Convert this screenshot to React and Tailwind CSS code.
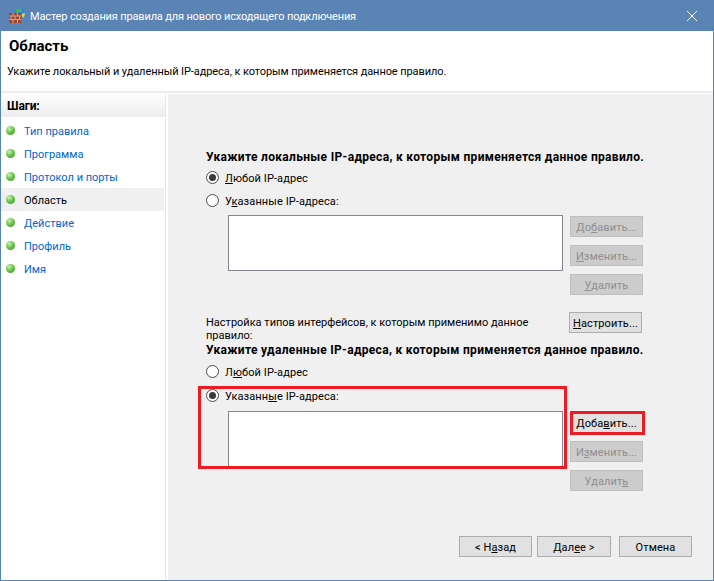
const FONT = "font-['Roboto','Noto_Sans',sans-serif]";

const STEPS = ['Тип правила', 'Программа', 'Протокол и порты', 'Область', 'Действие', 'Профиль', 'Имя'];

function FirewallIcon() {
  return (
    <svg width="17" height="17" viewBox="0 0 17 17" className="shrink-0">
      <circle cx="10.500" cy="5.500" r="5.500" fill="#2a86d8" />
      <path d="M6 3 Q9 -0.500 13 0.800 L12.500 4 L9.500 3.500 L8 6 Z" fill="#4fb548" />
      <path d="M12 6 L16 5 Q16 8 14 10 Z" fill="#d9d84e" />
      <rect x="0" y="5" width="12.500" height="10" fill="#9a4630" />
      <path d="M0 8h12.500M0 11.500h12.500M4 5v3M8.500 5v3M2 8v3.500M6 8v3.500M10.500 8v3.500M4 11.500V15M8.500 11.500V15" stroke="#d8a48a" strokeWidth="1" fill="none" />
    </svg>
  );
}

function Bullet() {
  return (
    <span className="w-[9px] h-[9px] rounded-full shrink-0 bg-[radial-gradient(circle_at_35%_30%,#c8f0b0,#5dbb3c_55%,#3f9a2c)]" />
  );
}

function Radio({ checked, children }) {
  return (
    <div className="flex items-center h-[15px] gap-[6px] text-black whitespace-nowrap tracking-[0.1px]">
      <span className="w-[13px] h-[13px] rounded-full border border-[#4d4d4d] bg-white flex items-center justify-center shrink-0">
        {checked && <span className="w-[7px] h-[7px] rounded-full bg-[#3a3a3a]" />}
      </span>
      <span className="pt-[2px]">{children}</span>
    </div>
  );
}

function SideButton({ children, disabled, className = '' }) {
  return (
    <div
      className={`w-[73px] h-[21px] shrink-0 border flex items-center justify-center text-[11px] tracking-[0.1px] leading-none whitespace-nowrap ${
        disabled ? 'bg-[#cccccc] border-[#bfbfbf] text-[#8f8f8f]' : 'bg-[#e1e1e1] border-[#adadad] text-black'
      } ${className}`}
    >
      <span className="pt-px">{children}</span>
    </div>
  );
}

function ListBox() {
  return <div className="w-[335px] h-[56px] shrink-0 bg-white border border-[#828790]" />;
}

export default function App() {
  return (
    <div className={`relative w-[714px] h-[581px] overflow-hidden flex flex-col border border-[#5a84b4] bg-white text-[11px] leading-[16px] ${FONT}`}>
      {/* Title bar */}
      <div className="h-[30px] shrink-0 bg-[#5a84b4] flex items-center pl-[8px] pr-[15px] text-white">
        <FirewallIcon />
        <span className="ml-[4px] pt-px tracking-[-0.15px]">Мастер создания правила для нового исходящего подключения</span>
        <svg width="12" height="12" viewBox="0 0 12 12" className="ml-auto">
          <path d="M1 1 L11 11 M11 1 L1 11" stroke="#fff" strokeWidth="1" />
        </svg>
      </div>

      {/* Header */}
      <div className="h-[62px] shrink-0 bg-white border-b-2 border-[#ececec] pl-[6px] flex flex-col">
        <div className="mt-[5px] ml-[2px] font-bold text-[15px] leading-[20px] text-black">Область</div>
        <div className="mt-[8px] text-black tracking-[-0.08px]">Укажите локальный и удаленный IP-адреса, к которым применяется данное правило.</div>
      </div>

      <div className="flex flex-1 min-h-0 mt-px">
        {/* Steps */}
        <div className="w-[165px] shrink-0 bg-white border-r border-[#e6e6e6] mr-[2px]">
          <div className="h-[23px] pl-[6px] flex items-center font-bold text-[12px] tracking-[-0.1px] text-black bg-gradient-to-b from-white to-[#ececec]">Шаги:</div>
          <div className="mt-[2px] pr-[1px]">
            {STEPS.map((step) => (
              <div
                key={step}
                className={`h-[23px] flex items-center gap-[9px] pl-[5px] ${step === 'Область' ? 'bg-[#f0f0f0] text-black' : 'text-[#0066cc]'}`}
              >
                <Bullet />
                <span className="pt-[2px]">{step}</span>
              </div>
            ))}
          </div>
        </div>

        {/* Main panel */}
        <div className="flex-1 min-w-0 bg-[#f0f0f0] flex flex-col pl-[38px] pr-[70px] pt-[55px] text-black">
          <div className="font-bold text-[12px] tracking-[0.32px] whitespace-nowrap">Укажите локальные IP-адреса, к которым применяется данное правило.</div>
          <div className="mt-[5px] flex flex-col gap-[8px]">
            <Radio checked><u>Л</u>юбой IP-адрес</Radio>
            <Radio>У<u>к</u>азанные IP-адреса:</Radio>
          </div>
          <div className="mt-[7px] ml-[22px] flex gap-[7px]">
            <ListBox />
            <div className="flex flex-col gap-[8px] pt-[1px]">
              <SideButton disabled>До<u>б</u>авить...</SideButton>
              <SideButton disabled><u>И</u>зменить...</SideButton>
              <SideButton disabled><u>У</u>далить</SideButton>
            </div>
          </div>

          <div className="mt-[17px] flex justify-between items-start">
            <div className="leading-[13px] pt-[4px] whitespace-nowrap">Настройка типов интерфейсов, к которым применимо данное<br />правило:</div>
            <SideButton className="-translate-x-px"><u>Н</u>астроить...</SideButton>
          </div>

          <div className="font-bold text-[12px] tracking-[0.32px] whitespace-nowrap">Укажите удаленные IP-адреса, к которым применяется данное правило.</div>
          <div className="mt-[6px] flex flex-col gap-[9px]">
            <Radio>Л<u>ю</u>бой IP-адрес</Radio>
            <Radio checked>Указанн<u>ы</u>е IP-адреса:</Radio>
          </div>
          <div className="mt-[8px] ml-[22px] flex gap-[7px]">
            <ListBox />
            <div className="flex flex-col gap-[8px] pt-[1px]">
              <SideButton>Доба<u>в</u>ить...</SideButton>
              <SideButton disabled>И<u>з</u>менить...</SideButton>
              <SideButton disabled>Удалит<u>ь</u></SideButton>
            </div>
          </div>

          {/* Wizard buttons */}
          <div className="mt-[45px] -mr-[49px] flex justify-end">
            <SideButton>&lt; Н<u>а</u>зад</SideButton>
            <SideButton className="ml-[5px] w-[74px]">Дал<u>е</u>е &gt;</SideButton>
            <SideButton className="ml-[8px]">Отмена</SideButton>
          </div>
        </div>
      </div>

      {/* Red annotation frames */}
      <div className="absolute left-[197px] top-[385px] w-[369px] h-[83px] border-[3px] border-[#ed1c24]" />
      <div className="absolute left-[569px] top-[410px] w-[75px] h-[24px] border-[3px] border-[#ed1c24]" />
    </div>
  );
}
